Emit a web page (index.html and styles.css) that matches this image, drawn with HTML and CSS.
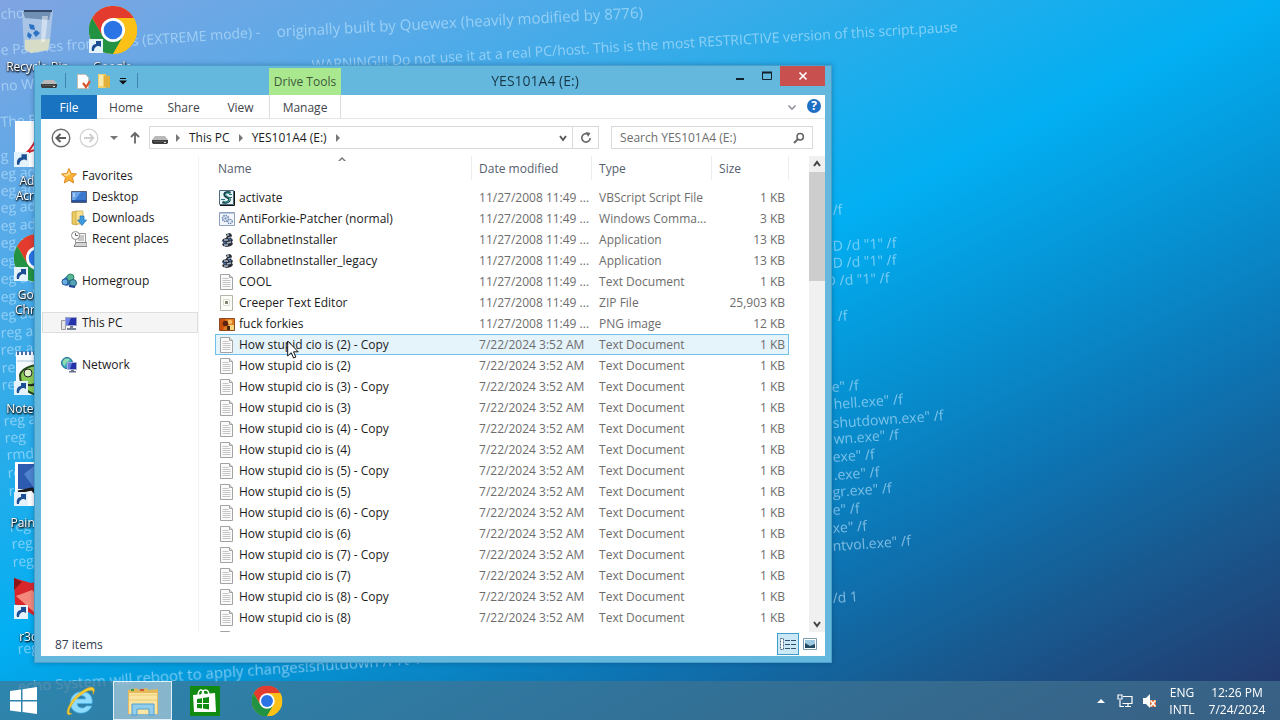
FILE: index.html
```html
<!DOCTYPE html>
<html lang="en">
<head>
<meta charset="utf-8">
<title>YES101A4 (E:)</title>
<link rel="stylesheet" href="styles.css">
</head>
<body>
<svg class="sprite" aria-hidden="true">
  <symbol id="i-txt" viewBox="0 0 16 16"><path d="M1.5.5h9l3 3v12h-12z" fill="#fafafa" stroke="#a3a3a3"/><path d="M10.500 .5v3h3" fill="#ddd" stroke="#a3a3a3"/><path d="M3.500 4.500h6M3.500 6.500h8M3.500 8.500h8M3.500 10.500h8M3.500 12.500h8" stroke="#c6c6c6"/></symbol>
  <symbol id="i-zip" viewBox="0 0 16 16"><path d="M1.500 .5h12v15h-12z" fill="#fdfdf8" stroke="#b5b5ac"/><path d="M4.500 4.500h6v6h-6z" fill="#fff" stroke="#dcdcd4"/><path d="M6 6h3v3H6z" fill="#7f8a70"/></symbol>
  <symbol id="i-vbs" viewBox="0 0 16 16"><path d="M.5.5h14v14H.5z" fill="#e6f4f4" stroke="#4b6c80"/><path d="M15.500 1v14.500H1" fill="none" stroke="#111"/><path d="M11.500 3C8 1.500 4.500 3 6 5.500s5 2 4.500 4.500-4 3-7 2" fill="none" stroke="#153f49" stroke-width="2.600"/><path d="M11 3.500C8 2.500 5.500 3.500 7 5.500s4.500 2 3.500 4.500-3.500 2-6 1.500" fill="none" stroke="#5cc9c1" stroke-width="1"/><path d="M9 7.500h4M2 9.500h4M10 4.500h3" stroke="#2d6a7a"/></symbol>
  <symbol id="i-cmd" viewBox="0 0 16 16"><path d="M.5 1.500h15v13H.5z" fill="#f2f6fb" stroke="#8fa2bd"/><path d="M1 2.500h14" stroke="#b9c8df"/><circle cx="6.500" cy="7.500" r="3" fill="#dbe6f5" stroke="#6b85ad" stroke-dasharray="1.500 .8" stroke-width="1.500"/><circle cx="6.500" cy="7.500" r="1" fill="#6b85ad"/><circle cx="11" cy="10.500" r="2.200" fill="#e3ebf6" stroke="#6b85ad" stroke-dasharray="1.200 .7" stroke-width="1.300"/></symbol>
  <symbol id="i-app" viewBox="0 0 16 16"><path d="M7 2l4-1 2 2-1 3 2 2-1 2 1 2-2 2-4 1-4-1-1-2 2-1-2-2 1-2 3-1 1-2-1-1z" fill="#2b3038"/><path d="M8 3h2M9 6l3-1M5 8h4M8 11l4-1M5 13h4" stroke="#a9b7c9" stroke-width="1.300"/><path d="M10 7l2 1M4 10l3 1" stroke="#4767a6" stroke-width="1.500"/></symbol>
  <symbol id="i-png" viewBox="0 0 16 16"><path d="M.5 2.500h15v12H.5z" fill="#e07b21" stroke="#8a4a1c"/><path d="M1 3h5l1 5-3 6H1z" fill="#c9500f"/><circle cx="6.500" cy="7.500" r="2.800" fill="#5b230f"/><circle cx="11" cy="6" r="2.200" fill="#f7c066"/><path d="M10 9h5v5h-5z" fill="#f5d77f"/><path d="M8 10h3v4H8z" fill="#4b2a12"/></symbol>
  <symbol id="i-drive" viewBox="0 0 16 8"><path d="M3 0h10l3 4H0z" fill="#b9b9b9"/><path d="M0 4h16v2.500L15 8H1L0 6.500z" fill="#3d3d3d"/><path d="M1.500 5.500h13" stroke="#555"/><path d="M12 6.500h2" stroke="#d9d9d9"/></symbol>
  <symbol id="i-star" viewBox="0 0 16 16"><path d="M8 .5l2.200 5 5.300.5-4 3.600 1.200 5.400L8 12.200 3.300 15l1.200-5.400-4-3.600 5.300-.5z" fill="#f9b233" stroke="#dd8b2a"/><path d="M8 2.500l1.500 4-5 2-2-2 4-.5z" fill="#ffdc8a"/></symbol>
  <symbol id="i-desktop" viewBox="0 0 16 16"><path d="M.5 2.500h15v11H.5z" fill="#3b78cf" stroke="#53607a"/><path d="M1 3h9L4 11H1z" fill="#6aa3e6"/><path d="M1 12h14" stroke="#24478e" stroke-width="1.500"/><path d="M2 5h2M2 7h2" stroke="#dbeaff"/></symbol>
  <symbol id="i-down" viewBox="0 0 16 16"><path d="M1 2l5-1v14l-5-1z" fill="#ecca62" stroke="#b99538" stroke-width=".7"/><path d="M5 1h7v13H5z" fill="#f8e08f" stroke="#c7a446" stroke-width=".7"/><path d="M9 6h4v4h2.500L11 15.500 6.500 10H9z" fill="#3d9be0" stroke="#2671b3" stroke-width=".7"/></symbol>
  <symbol id="i-recent" viewBox="0 0 16 16"><path d="M4.500 2.500h10v9h-10z" fill="#f6f6f6" stroke="#999"/><path d="M7 5h6M7 7h6M7 9h6" stroke="#9a9a9a"/><circle cx="4.500" cy="4.500" r="4" fill="#fff" stroke="#8c8c8c"/><path d="M4.500 2v2.500H7" fill="none" stroke="#666"/><path d="M3 15.500l2-4h11v4z" fill="#d4d4d4" stroke="#888"/></symbol>
  <symbol id="i-home" viewBox="0 0 16 16"><path d="M1 7l5-4 4 4v4l-4 2-5-2z" fill="#2b72bd"/><circle cx="9.500" cy="4.500" r="3.500" fill="#59b795" stroke="#2e8266"/><circle cx="4" cy="9" r="3" fill="#69aee0" stroke="#2c5e9e"/><circle cx="12" cy="10" r="3.500" fill="#56a3b9" stroke="#245f7a"/><path d="M8 13l6 1" stroke="#1e3f8f" stroke-width="2"/></symbol>
  <symbol id="i-pc" viewBox="0 0 16 16"><path d="M.5 5.500h4v9h-4z" fill="#e7e7e7" stroke="#999"/><path d="M4.500 2.500h11v8h-11z" fill="#2531a8" stroke="#9ba4c8"/><path d="M5 3h5L7 10H5z" fill="#6a80e6"/><path d="M9 11h3v2H9zM6 13h9v2H6z" fill="#777f95"/></symbol>
  <symbol id="i-net" viewBox="0 0 16 16"><circle cx="6" cy="6" r="5.500" fill="#3aa6c2" stroke="#206b8e"/><path d="M2 4c2-3 5-3 7-1L5 6 4 9C2 8 1 6 2 4z" fill="#8fdcae"/><path d="M6.500 5.500h9v7h-9z" fill="#2331a6" stroke="#a9b2d6"/><path d="M7 6h4l-2 6H7z" fill="#6478dd"/><path d="M10 13h3v1h2v1.500H8V14h2z" fill="#6b7389"/></symbol>
  <symbol id="i-chrome" viewBox="0 0 48 48"><circle cx="24" cy="24" r="24" fill="#fbc116"/><path d="M3.200 12A24 24 0 0 1 44.800 12H24L13.600 30z" fill="#e33b2e"/><path d="M3.200 12A24 24 0 0 0 24 48L34.400 30 24 34 13.600 30z" fill="#229342"/><path d="M24 48l10.400-18V18L24 12h20.800A24 24 0 0 1 24 48z" fill="#fbc116"/><circle cx="24" cy="24" r="12" fill="#fff"/><circle cx="24" cy="24" r="9.300" fill="#2b74e6"/></symbol>
  <symbol id="i-short" viewBox="0 0 14 14"><path d="M0 0h14v14H0z" fill="#e4f2fb"/><path d="M3 12C2 8 4 5 7 5V2h5v6l-2-1C7 7 5 9 5 12z" fill="#1c4e94"/></symbol>
</svg>

<div class="desktop">
  <svg class="wallpaper" viewBox="0 0 1280 720" preserveAspectRatio="xMidYMid slice" aria-hidden="true">
    <defs><linearGradient id="sky" gradientUnits="userSpaceOnUse" x1="0" y1="0" x2="544" y2="1088">
      <stop offset="0" stop-color="#80a4e1"/><stop offset=".16" stop-color="#5aaae8"/><stop offset=".32" stop-color="#2cace9"/><stop offset=".47" stop-color="#02aff2"/><stop offset=".6" stop-color="#0692d3"/><stop offset=".72" stop-color="#0d75b4"/><stop offset=".84" stop-color="#18598f"/><stop offset="1" stop-color="#253468"/>
    </linearGradient></defs>
    <path fill="url(#sky)" d="M0 0h1280v720H0z"/>
    <g class="scrawl">
      <text transform="translate(1 19) rotate(-3)">cho</text>
      <text transform="translate(1 55) rotate(-4)">e Patches from mods (EXTREME mode) -</text>
      <text class="large" transform="translate(277 37) rotate(-3)">originally built by Quewex (heavily modified by 8776)</text>
      <text transform="translate(312 70) rotate(-3.400)">WARNING!!! Do not use it at a real PC/host. This is the most RESTRICTIVE version of this script.pause</text>
      <text transform="translate(1 91) rotate(-4)">no Windows</text>
      <text transform="translate(1 127) rotate(-4)">The BIOS</text>
      <text transform="translate(1 161) rotate(-4)">g</text>
      <text transform="translate(1 179) rotate(-4)">eg add</text>
      <text transform="translate(1 196) rotate(-4)">eg add</text>
      <text transform="translate(1 213) rotate(-4)">eg add</text>
      <text transform="translate(1 231) rotate(-4)">eg add</text>
      <text transform="translate(1 248) rotate(-4)">eg add</text>
      <text transform="translate(1 266) rotate(-4)">eg add</text>
      <text transform="translate(1 284) rotate(-4)">eg add</text>
      <text transform="translate(1 302) rotate(-4)">eg add</text>
      <text transform="translate(1 320) rotate(-4)">eg add</text>
      <text transform="translate(1 338) rotate(-4)">reg add</text>
      <text transform="translate(1 355) rotate(-4)">reg add</text>
      <text transform="translate(2 373) rotate(-4)">reg</text>
      <text transform="translate(2 390) rotate(-4)">reg</text>
      <text transform="translate(4 426) rotate(-4)">reg add</text>
      <text transform="translate(5 443) rotate(-4)">reg</text>
      <text transform="translate(7 460) rotate(-4)">rmd</text>
      <text transform="translate(8 478) rotate(-4)">reg</text>
      <text transform="translate(9 496) rotate(-4)">reg</text>
      <text transform="translate(10 532) rotate(-4)">reg</text>
      <text transform="translate(12 549) rotate(-4)">reg</text>
      <text transform="translate(13 567) rotate(-4)">reg</text>
      <text transform="translate(18 654) rotate(-4)">reg</text>
      <text class="large" transform="translate(18 692) rotate(-4)">echo System will reboot to apply changes!shutdown /r /t 1</text>
      <text transform="translate(833 215) rotate(-4)">/f</text>
      <text transform="translate(833 251) rotate(-3)">D /d "1"  /f</text>
      <text transform="translate(833 268) rotate(-3)">D /d "1"  /f</text>
      <text transform="translate(826 286) rotate(-3)">D /d "1"  /f</text>
      <text transform="translate(838 321) rotate(-4)">/f</text>
      <text transform="translate(832 392) rotate(-4)">e" /f</text>
      <text transform="translate(834 409) rotate(-4)">hell.exe" /f</text>
      <text transform="translate(833 428) rotate(-4)">shutdown.exe" /f</text>
      <text transform="translate(834 444) rotate(-4)">wn.exe" /f</text>
      <text transform="translate(833 462) rotate(-4)">exe" /f</text>
      <text transform="translate(834 480) rotate(-4)">.exe" /f</text>
      <text transform="translate(833 497) rotate(-4)">gr.exe" /f</text>
      <text transform="translate(833 515) rotate(-4)">e" /f</text>
      <text transform="translate(833 533) rotate(-4)">xe" /f</text>
      <text transform="translate(833 551) rotate(-4)">ntvol.exe" /f</text>
      <text transform="translate(833 603) rotate(-4)">/d 1</text>
    </g>
  </svg>

  <ul class="shortcuts">
    <li><svg class="pic" viewBox="0 0 48 48"><path d="M8 5l31-1-4 40-18 3-7-4z" fill="#b9cfe6" opacity=".75"/><path d="M9 6h28l-2 8-24-2z" fill="#6f8fb4"/><path d="M10 5l28 0" stroke="#34486a" stroke-width="2"/><path d="M11 34l25-1-2 11-17 3-6-3z" fill="#d7dcc6"/><path d="M15 18l5 1 1 5-5-1zM22 24l4 3-4 4-3-4zM14 26l4 3-2 4-3-3z" fill="#2c72c4"/><path d="M28 10l6 0-3 26-4 0z" fill="#fff" opacity=".45"/></svg><span>Recycle Bin</span></li>
    <li><svg class="pic" viewBox="0 0 48 48"><path d="M1 1h46v46H1z" fill="#fff"/><path d="M11 34c8-6 15-20 14-27 0 12 8 19 18 20-12-1-22 2-32 7z" fill="none" stroke="#d3202a" stroke-width="2"/><use href="#i-short" y="32" width="15" height="15"/></svg><span>Adobe Acrobat</span></li>
    <li><svg class="pic" viewBox="0 0 48 48"><use href="#i-chrome" width="48" height="48"/><use href="#i-short" y="33" width="14" height="14"/></svg><span>Google Chrome</span></li>
    <li><svg class="pic" viewBox="0 0 48 48"><path d="M2 4h44v43H2z" fill="#f7fbff"/><path d="M3 5h42" stroke="#4b6aa5" stroke-width="4" stroke-dasharray="2 2"/><path d="M3 13h42M3 43h42" stroke="#a9c6dc"/><path d="M6 27c2-8 18-13 28-8s8 24-4 27-24-5-24-19z" fill="#8ccb58" stroke="#24451d" stroke-width="2"/><circle cx="14" cy="25" r="4" fill="#dff0c9" stroke="#222"/><path d="M8 34c6 4 12 4 16 0" fill="none" stroke="#222" stroke-width="2"/><use href="#i-short" y="33" width="14" height="14"/></svg><span>Notepad++</span></li>
    <li><svg class="pic" viewBox="0 0 48 48"><path d="M1 0h46v44H1z" fill="#fff"/><path d="M4 2h42v25H4z" fill="#2c5bb0"/><path d="M10 12l10-8 8 10-8 12z" fill="#4f84d0"/><path d="M4 30l14-3 10 12" stroke="#1a1a1a" stroke-width="3" fill="none"/><use href="#i-short" y="30" width="14" height="14"/></svg><span>Paint.NET</span></li>
    <li><svg class="pic" viewBox="0 0 48 48"><path d="M0 2l17 5 12-2 16 12-2 20-14 8L1 28z" fill="#d9262b"/><path d="M0 2l8 4-8 8z" fill="#8c1519"/><path d="M2 20l16-6 14 14-12 8z" fill="#f4897b"/><use href="#i-short" y="29" width="14" height="14"/></svg><span>r3dfox</span></li>
    <li><svg class="pic" viewBox="0 0 48 48"><use href="#i-chrome" width="48" height="48"/><use href="#i-short" y="33" width="14" height="14"/></svg><span>Google Chrome</span></li>
  </ul>

  <main class="window">
    <header class="titlebar">
      <svg class="drive" viewBox="0 0 16 8"><use href="#i-drive"/></svg>
      <span class="sep"></span>
      <button class="quick" aria-label="Properties"><svg viewBox="0 0 16 16"><path d="M2.500 1.500h8l3 3v11h-11z" fill="#fff" stroke="#c8bdb2"/><path d="M8 10l3 4 4-6" fill="none" stroke="#d9552c" stroke-width="2.200"/></svg></button>
      <button class="quick" aria-label="New folder"><svg viewBox="0 0 16 16"><path d="M2 1h8v14H2z" fill="#f0cf6c"/><path d="M8 2l6 1v12l-6-1z" fill="#e2b13c"/><path d="M3 2h4v11H3z" fill="#fae9ac"/></svg></button>
      <button class="quick small" aria-label="Customize"><svg viewBox="0 0 8 8"><path d="M1 1.500h6" stroke="#111"/><path d="M0 3.500h8L4 7.500z" fill="#111"/></svg></button>
      <span class="sep"></span>
      <span class="tool-tab">Drive Tools</span>
      <h1>YES101A4 (E:)</h1>
      <div class="controls">
        <button aria-label="Minimize"><svg viewBox="0 0 12 12"><path d="M2 9h8" stroke="#10222c" stroke-width="2"/></svg></button>
        <button aria-label="Maximize"><svg viewBox="0 0 12 12"><path d="M1.500 2.500h9v7h-9z" fill="none" stroke="#10222c"/><path d="M1 2.500h10" stroke="#10222c" stroke-width="2"/></svg></button>
        <button class="close" aria-label="Close"><svg viewBox="0 0 12 12"><path d="M2.500 2.500l7 7M9.500 2.500l-7 7" stroke="#fff" stroke-width="1.700"/></svg></button>
      </div>
    </header>

    <div class="body">
      <nav class="ribbon">
        <button class="file">File</button>
        <button class="t-home">Home</button>
        <button class="t-share">Share</button>
        <button class="t-view">View</button>
        <button class="manage">Manage</button>
        <span class="grow"></span>
        <button class="expand" aria-label="Expand ribbon"><svg viewBox="0 0 12 12"><path d="M2.500 4.500L6 8l3.500-3.500" fill="none" stroke="#8f959b" stroke-width="1.600"/></svg></button>
        <button class="help" aria-label="Help">?</button>
      </nav>

      <div class="navbar">
        <button class="round" aria-label="Back"><svg viewBox="0 0 20 20"><circle cx="10" cy="10" r="8.800" fill="#fff" stroke="#6c6c6c" stroke-width="1.400"/><path d="M15 10H6M9.500 6L5.500 10l4 4" fill="none" stroke="#5c5c5c" stroke-width="2"/></svg></button>
        <button class="round" aria-label="Forward"><svg viewBox="0 0 20 20"><circle cx="10" cy="10" r="8.800" fill="#fff" stroke="#d0d0d0" stroke-width="1.200"/><path d="M5 10h9M10.500 6l4 4-4 4" fill="none" stroke="#cfcfcf" stroke-width="1.800"/></svg></button>
        <button class="tiny" aria-label="Recent locations"><svg viewBox="0 0 8 8"><path d="M0 2h8L4 6z" fill="#777"/></svg></button>
        <button class="up" aria-label="Up"><svg viewBox="0 0 12 12"><path d="M6 12V1.500M2 5.500l4-4 4 4" fill="none" stroke="#666" stroke-width="1.800"/></svg></button>
        <div class="address">
          <svg class="drive" viewBox="0 0 16 8"><use href="#i-drive"/></svg>
          <svg class="arrow" viewBox="0 0 4 8"><path d="M0 0l4 4-4 4z"/></svg>
          <a href="#pc">This PC</a>
          <svg class="arrow" viewBox="0 0 4 8"><path d="M0 0l4 4-4 4z"/></svg>
          <a href="#drive">YES101A4 (E:)</a>
          <svg class="arrow" viewBox="0 0 4 8"><path d="M0 0l4 4-4 4z"/></svg>
          <span class="grow"></span>
          <button class="history" aria-label="Previous locations"><svg viewBox="0 0 12 12"><path d="M3 4l3 4 3-4" fill="none" stroke="#555" stroke-width="1.800"/></svg></button>
          <button class="refresh" aria-label="Refresh"><svg viewBox="0 0 12 12"><path d="M8.500 2.500A4.200 4.200 0 1 0 10.200 6" fill="none" stroke="#666" stroke-width="1.600"/><path d="M6 0l4.500 1L8 5z" fill="#666"/></svg></button>
        </div>
        <div class="search">
          <input type="text" aria-label="Search" placeholder="Search YES101A4 (E:)">
          <svg viewBox="0 0 12 12"><circle cx="7.200" cy="4.800" r="3.200" fill="none" stroke="#666" stroke-width="1.500"/><path d="M5 7L1 11" stroke="#666" stroke-width="2"/></svg>
        </div>
      </div>

      <div class="panes">
        <aside class="tree">
          <a class="top" href="#fav"><svg><use href="#i-star"/></svg>Favorites</a>
          <a href="#desk"><svg><use href="#i-desktop"/></svg>Desktop</a>
          <a href="#down"><svg><use href="#i-down"/></svg>Downloads</a>
          <a href="#rec"><svg><use href="#i-recent"/></svg>Recent places</a>
          <a class="top apart" href="#home"><svg><use href="#i-home"/></svg>Homegroup</a>
          <a class="top apart current" href="#pc"><svg><use href="#i-pc"/></svg>This PC</a>
          <a class="top apart" href="#net"><svg><use href="#i-net"/></svg>Network</a>
        </aside>

        <section class="files">
          <table>
            <colgroup><col><col class="c-date"><col class="c-type"><col class="c-size"></colgroup>
            <thead><tr><th>Name<svg class="sort" viewBox="0 0 8 4"><path d="M0 4l4-4 4 4H6L4 2 2 4z" fill="#777"/></svg></th><th>Date modified</th><th>Type</th><th>Size</th></tr></thead>
            <tbody>
              <tr><td><svg><use href="#i-vbs"/></svg>activate</td><td>11/27/2008 11:49 ...</td><td>VBScript Script File</td><td>1 KB</td></tr>
              <tr><td><svg><use href="#i-cmd"/></svg>AntiForkie-Patcher (normal)</td><td>11/27/2008 11:49 ...</td><td>Windows Comma...</td><td>3 KB</td></tr>
              <tr><td><svg><use href="#i-app"/></svg>CollabnetInstaller</td><td>11/27/2008 11:49 ...</td><td>Application</td><td>13 KB</td></tr>
              <tr><td><svg><use href="#i-app"/></svg>CollabnetInstaller_legacy</td><td>11/27/2008 11:49 ...</td><td>Application</td><td>13 KB</td></tr>
              <tr><td><svg><use href="#i-txt"/></svg>COOL</td><td>11/27/2008 11:49 ...</td><td>Text Document</td><td>1 KB</td></tr>
              <tr><td><svg><use href="#i-zip"/></svg>Creeper Text Editor</td><td>11/27/2008 11:49 ...</td><td>ZIP File</td><td>25,903 KB</td></tr>
              <tr><td><svg><use href="#i-png"/></svg>fuck forkies</td><td>11/27/2008 11:49 ...</td><td>PNG image</td><td>12 KB</td></tr>
              <tr class="hover"><td><svg><use href="#i-txt"/></svg>How stupid cio is (2) - Copy</td><td>7/22/2024 3:52 AM</td><td>Text Document</td><td>1 KB</td></tr>
              <tr><td><svg><use href="#i-txt"/></svg>How stupid cio is (2)</td><td>7/22/2024 3:52 AM</td><td>Text Document</td><td>1 KB</td></tr>
              <tr><td><svg><use href="#i-txt"/></svg>How stupid cio is (3) - Copy</td><td>7/22/2024 3:52 AM</td><td>Text Document</td><td>1 KB</td></tr>
              <tr><td><svg><use href="#i-txt"/></svg>How stupid cio is (3)</td><td>7/22/2024 3:52 AM</td><td>Text Document</td><td>1 KB</td></tr>
              <tr><td><svg><use href="#i-txt"/></svg>How stupid cio is (4) - Copy</td><td>7/22/2024 3:52 AM</td><td>Text Document</td><td>1 KB</td></tr>
              <tr><td><svg><use href="#i-txt"/></svg>How stupid cio is (4)</td><td>7/22/2024 3:52 AM</td><td>Text Document</td><td>1 KB</td></tr>
              <tr><td><svg><use href="#i-txt"/></svg>How stupid cio is (5) - Copy</td><td>7/22/2024 3:52 AM</td><td>Text Document</td><td>1 KB</td></tr>
              <tr><td><svg><use href="#i-txt"/></svg>How stupid cio is (5)</td><td>7/22/2024 3:52 AM</td><td>Text Document</td><td>1 KB</td></tr>
              <tr><td><svg><use href="#i-txt"/></svg>How stupid cio is (6) - Copy</td><td>7/22/2024 3:52 AM</td><td>Text Document</td><td>1 KB</td></tr>
              <tr><td><svg><use href="#i-txt"/></svg>How stupid cio is (6)</td><td>7/22/2024 3:52 AM</td><td>Text Document</td><td>1 KB</td></tr>
              <tr><td><svg><use href="#i-txt"/></svg>How stupid cio is (7) - Copy</td><td>7/22/2024 3:52 AM</td><td>Text Document</td><td>1 KB</td></tr>
              <tr><td><svg><use href="#i-txt"/></svg>How stupid cio is (7)</td><td>7/22/2024 3:52 AM</td><td>Text Document</td><td>1 KB</td></tr>
              <tr><td><svg><use href="#i-txt"/></svg>How stupid cio is (8) - Copy</td><td>7/22/2024 3:52 AM</td><td>Text Document</td><td>1 KB</td></tr>
              <tr><td><svg><use href="#i-txt"/></svg>How stupid cio is (8)</td><td>7/22/2024 3:52 AM</td><td>Text Document</td><td>1 KB</td></tr>
              <tr><td><svg><use href="#i-txt"/></svg></td><td></td><td></td><td></td></tr>
            </tbody>
          </table>
        </section>
        <div class="scrollbar">
          <button aria-label="Scroll up"><svg viewBox="0 0 10 10"><path d="M2 7l3-4 3 4" fill="none" stroke="#444" stroke-width="2"/></svg></button>
          <div class="thumb"></div>
          <button aria-label="Scroll down"><svg viewBox="0 0 10 10"><path d="M2 3l3 4 3-4" fill="none" stroke="#444" stroke-width="2"/></svg></button>
        </div>
      </div>

      <footer class="status">
        <span>87 items</span>
        <button class="view on" aria-label="Details view"><svg viewBox="0 0 16 14"><path d="M.5 1.500h3v11h-3z" fill="#fff" stroke="#4d6a80" stroke-dasharray="2 1"/><path d="M5 3.500h5M11 3.500h5M5 7.500h5M11 7.500h5M5 11.500h5M11 11.500h5" stroke="#30506e"/></svg></button>
        <button class="view" aria-label="Thumbnail view"><svg viewBox="0 0 16 14"><path d="M1.500 1.500h13v11h-13z" fill="#fff" stroke="#7c9ab0"/><path d="M3 3h10v8H3z" fill="#9cc8e2"/><path d="M3 6l5 3 5-2v4H3z" fill="#23485f"/></svg></button>
      </footer>
    </div>
  </main>

  <svg class="pointer" viewBox="0 0 12 19" aria-hidden="true"><path d="M.7 1v15l3.500-3.300L6.600 18l2.300-1-2.400-5.200h4.700z" fill="#fff" stroke="#111"/></svg>
</div>

<footer class="taskbar">
  <button class="task" aria-label="Start"><svg viewBox="0 0 28 28"><path d="M0 4l11-1.500V13H0zM12.500 2.200L27 0v13H12.500zM0 14.500h11V25L0 23.500zM12.500 14.500H27V27l-14.500-2z" fill="#fff"/></svg></button>
  <button class="task" aria-label="Internet Explorer"><svg class="big" viewBox="0 0 32 32"><path d="M27 18.500H12c.4 5 7 6 9.300 2.500h5.400C22.500 31.500 5.500 30 5.500 18S20 4 25 10c2 2.200 2.500 5.500 2 8.500zM12 14h8.800c-.4-4.500-8.100-4.700-8.800 0z" fill="#8fdcff" stroke="#4fb8ea" stroke-width=".8"/><path d="M7 28.500C0 33 1 24 7 16 14 6.500 26-.5 29 3.500c1 1.500 0 4-1 6 .3-2 .4-3.500-.8-4C23 4 13 11 8 18 3 25.500 3 29 7 28.500z" fill="#f8cf35" stroke="#d8a51d" stroke-width=".6"/></svg></button>
  <button class="task active" aria-label="File Explorer"><svg class="big" viewBox="0 0 32 32"><path d="M1 5l9-2 1 2 9-2 1 2 10-1v25H1z" fill="#e4b95a"/><path d="M2 8h28v21H2z" fill="#fae6a2"/><path d="M2 10h28M2 15h28" stroke="#eccb76"/><path d="M4 5h3" stroke="#3c9f43" stroke-width="2"/><path d="M13 5h4" stroke="#d05734" stroke-width="2"/><path d="M5 30V19h22v11h-5v-6H10v6z" fill="#92cdeb" stroke="#4f9fd0"/></svg></button>
  <button class="task" aria-label="Store"><svg class="big" viewBox="0 0 32 32"><path d="M1 1h30v30H1z" fill="#108a10"/><path d="M4 10l22-2 1 19-22 0z" fill="#fff"/><path d="M9 12c0-9 5-9 6-2M13 11c0-8 7-8 7 0" fill="none" stroke="#fff" stroke-width="1.500"/><path d="M8 14l5-.7v4.700H8zM14 13l6-1v6h-6zM8 19h5v4.500L8 23zM14 19h6v5.500l-6-1z" fill="#108a10"/></svg></button>
  <button class="task" aria-label="Google Chrome"><svg class="big" viewBox="-1 -1 50 50"><use href="#i-chrome" width="48" height="48"/></svg></button>
  <span class="grow"></span>
  <button class="tray caret" aria-label="Show hidden icons"><svg viewBox="0 0 8 6"><path d="M0 5l4-4 4 4z" fill="#fff"/></svg></button>
  <button class="tray" aria-label="Network"><svg viewBox="0 0 16 16"><path d="M6 3.500h9v7H5.500M8 13.500h6M11 11v2M3 7v6.500h4" fill="none" stroke="#fff" stroke-width="1.200"/><path d="M1 2h4v4H1z" fill="none" stroke="#fff" stroke-width="1.200"/></svg></button>
  <button class="tray" aria-label="Volume muted"><svg viewBox="0 0 16 16"><path d="M2 5h3l4-4v14l-4-4H2z" fill="#fff"/><path d="M9 7h6v7H9z" fill="#e36a35"/><path d="M9.500 7.500l5 6M14.500 7.500l-5 6" stroke="#fff" stroke-width="1.500"/></svg></button>
  <div class="stack lang"><span>ENG</span><span>INTL</span></div>
  <div class="stack clock"><time>12:26 PM</time><time>7/24/2024</time></div>
</footer>
</body>
</html>
```
FILE: styles.css
```css
* { box-sizing: border-box; }
body {
  margin: 0;
  height: 100vh;
  display: flex;
  flex-direction: column;
  overflow: hidden;
  position: relative;
  font: 12px/21px "Open Sans", "Noto Sans", sans-serif;
  color: #1c1c1c;
  background: #02aff2;
}
button { border: 0; padding: 0; background: none; font: inherit; color: inherit; display: flex; align-items: center; justify-content: center; }
a { color: inherit; text-decoration: none; }
.sprite { position: absolute; width: 0; height: 0; }
.grow { flex: 1; }

.desktop { flex: 1; min-height: 0; }
.wallpaper { position: absolute; inset: 0; width: 100%; height: 100%; }
.scrawl { font-family: "Open Sans", sans-serif; font-size: 14px; fill: #c4e8ff; opacity: .6; }
.scrawl .large { font-size: 15px; }

.shortcuts {
  position: absolute; top: 6px; left: 0; margin: 0; padding: 0; list-style: none;
  display: grid; grid-auto-flow: column; grid-template-rows: repeat(6, 114px); grid-auto-columns: 75px;
}
.shortcuts li { display: flex; flex-direction: column; align-items: center; gap: 5px; }
.shortcuts .pic { width: 48px; height: 48px; }
.shortcuts span { color: #fff; line-height: 15px; text-align: center; text-shadow: 0 1px 2px #000, 1px 1px 2px #000; }

.window {
  position: absolute; left: 34px; top: 65px; bottom: 57px; width: 62.35%;
  display: flex; flex-direction: column;
  padding: 0 6px 6px;
  background: #65b8dd;
  border: 1px solid #4c9fca;
  box-shadow: 0 0 5px rgba(0, 40, 80, .35);
}
.titlebar { height: 29px; display: flex; align-items: center; position: relative; flex: none; }
.titlebar .drive { width: 16px; height: 8px; margin-top: 6px; }
.sep { width: 1px; height: 15px; background: #3f86ad; margin: 0 6px 0 8px; }
.quick { width: 21px; }
.quick svg { width: 16px; height: 16px; }
.quick.small { width: 18px; }
.quick.small svg { width: 8px; height: 8px; }
.quick + .sep { margin-left: 5px; }
.tool-tab {
  position: absolute; left: 228px; top: 2px; width: 72px; height: 27px; line-height: 27px;
  background: #aae890; color: #3c5a38; text-align: center;
}
.titlebar h1 { position: absolute; left: 300px; right: 96px; margin: 0; font-size: 14px; font-weight: 400; line-height: 28px; text-align: center; color: #173949; }
.controls { margin-left: auto; align-self: flex-start; display: flex; }
.controls button { width: 27px; height: 20px; }
.controls svg { width: 12px; height: 12px; }
.controls .close { width: 45px; background: #c8504f; }

.body { flex: 1; min-height: 0; display: flex; flex-direction: column; background: #fff; }
.ribbon { height: 24px; display: flex; border-bottom: 1px solid #e3e5e7; color: #3f444b; flex: none; }
.ribbon button { height: 24px; }
.ribbon .file { width: 56px; background: #1a73c0; color: #fff; }
.t-home { width: 58px; }
.t-share { width: 57px; }
.t-view { width: 57px; }
.ribbon .manage { width: 72px; border: solid #dcdcdc; border-width: 0 1px; }
.expand svg { width: 12px; height: 12px; }
.ribbon .help { width: 14px; height: 14px; margin: 4px 4px 0 9px; border-radius: 50%; background: #1d6fc4; color: #fff; font-weight: 700; line-height: 14px; }

.navbar { height: 37px; display: flex; align-items: center; padding: 0 12px 0 10px; flex: none; }
.round { width: 20px; height: 20px; margin-right: 8px; }
.round svg { width: 20px; height: 20px; }
.tiny { width: 14px; }
.tiny svg { width: 8px; height: 8px; }
.up { width: 28px; }
.up svg { width: 12px; height: 13px; }
.address { flex: 1; height: 23px; display: flex; align-items: center; border: 1px solid #d9d9d9; padding-left: 2px; }
.address .drive { width: 16px; height: 8px; margin: 5px 8px 0 0; }
.address a + .arrow { margin-left: 9px; }
.address .arrow + a { margin-left: 9px; }
.arrow { width: 4px; height: 8px; fill: #777; }
.history { width: 18px; }
.refresh { width: 26px; height: 21px; border-left: 1px solid #d9d9d9; }
.address button svg { width: 12px; height: 12px; }
.search { width: 202px; height: 23px; margin-left: 12px; display: flex; align-items: center; border: 1px solid #d9d9d9; padding: 0 7px 0 8px; }
.search input { flex: 1; min-width: 0; border: 0; padding: 0; background: none; font: inherit; outline: 0; }
.search input::placeholder { color: #6d6d6d; opacity: 1; }
.search svg { width: 12px; height: 12px; }

.panes { flex: 1; min-height: 0; display: flex; }
.tree { width: 158px; padding: 9px 0 0 1px; border-right: 1px solid #f3f3f3; overflow: hidden; flex: none; }
.tree a { display: flex; align-items: center; gap: 5px; height: 21px; padding-left: 29px; white-space: nowrap; }
.tree a.top { padding-left: 19px; }
.tree a.apart { margin-top: 21px; }
.tree svg { width: 16px; height: 16px; }
.tree .current { background: #f5f5f5; box-shadow: inset 0 0 0 1px #dedede; }

.files { flex: 1; min-width: 0; overflow: hidden; padding-left: 16px; }
table { width: calc(100% - 20px); border-collapse: collapse; table-layout: fixed; }
.c-date, .c-type { width: 120px; }
.c-size { width: 77px; }
th { height: 31px; padding: 0 0 6px 7px; text-align: left; font-weight: 400; color: #56606e; position: relative; background: linear-gradient(#ededed, #ededed) right top / 1px 24px no-repeat; }
th:first-child { padding-left: 3px; }
.sort { position: absolute; left: 48%; top: 1px; width: 8px; height: 4px; }
td { height: 21px; padding: 0 0 0 7px; color: #6d6d6d; white-space: nowrap; overflow: hidden; }
td:first-child { padding-left: 4px; color: #1c1c1c; }
td:last-child { text-align: right; padding: 0 4px 0 0; }
td svg { width: 16px; height: 16px; margin: -2px 4px 0 0; vertical-align: middle; }
.hover { background: #e5f3fb; outline: 1px solid #70c0e7; outline-offset: -1px; }
.scrollbar { width: 16px; background: #f0f0f1; display: flex; flex-direction: column; flex: none; }
.scrollbar button { height: 16px; flex: none; }
.scrollbar svg { width: 10px; height: 10px; }
.thumb { height: 23%; background: #cdcdce; margin-bottom: auto; }

.status { height: 24px; display: flex; align-items: center; padding: 0 4px 0 14px; color: #34404f; flex: none; }
.status span { flex: 1; }
.view { width: 22px; height: 22px; }
.view.on { background: #cbe8f6; border: 1px solid #3f9fc9; }
.view svg { width: 16px; height: 14px; }

.pointer { position: absolute; left: 287px; top: 340px; width: 12px; height: 19px; }

.taskbar { height: 39px; display: flex; align-items: stretch; padding: 0 9px 0 0; position: relative; background: rgba(66, 117, 145, .68); color: #fff; flex: none; }
.task { width: 59px; margin-right: 3px; }
.task:first-child { width: 48px; }
.task svg { width: 28px; height: 28px; }
.task svg.big { width: 32px; height: 32px; }
.task.active { background: rgba(225, 235, 240, .5); border: 1px solid #dff1fa; }
.tray { width: 24px; }
.tray svg { width: 16px; height: 16px; }
.caret svg { width: 8px; height: 6px; }
.stack { display: flex; flex-direction: column; justify-content: center; align-items: center; line-height: 17px; }
.lang { width: 42px; }
.clock { width: 68px; }
```
